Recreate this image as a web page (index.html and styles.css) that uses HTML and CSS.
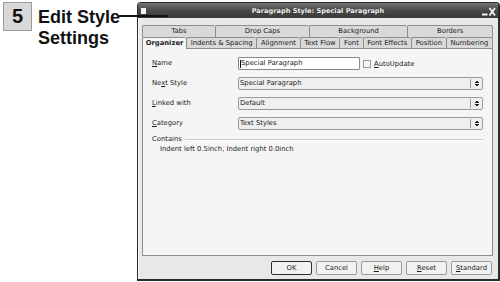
FILE: index.html
```html
<!DOCTYPE html>
<html lang="en">
<head>
  <meta charset="UTF-8" />
  <title>Paragraph Style</title>
  <link rel="stylesheet" href="styles.css">
</head>
<body>
  <div class="page">
    <div class="callout">
      <div class="step">5</div>
      <div class="step-title">Edit Style<br>Settings</div>
      <div class="pointer"></div>
    </div>

    <div class="window">
      <div class="titlebar">
        <div class="tb-left"><span class="win-icon"></span></div>
        <div class="win-title">Paragraph Style: Special Paragraph</div>
        <div class="tb-right">
          <svg width="14" height="9" viewBox="0 0 14 9">
            <rect x="0" y="6.5" width="5.5" height="2" fill="#f2f2f2"/>
            <path d="M7.5 1 L13 8.5 M13 1 L7.5 8.5" stroke="#f2f2f2" stroke-width="1.8"/>
          </svg>
        </div>
      </div>

      <div class="win-body">
        <div class="tab-row">
          <div class="tab">Tabs</div>
          <div class="tab">Drop Caps</div>
          <div class="tab">Background</div>
          <div class="tab">Borders</div>
        </div>
        <div class="tab-row front">
          <div class="tab active">Organizer</div>
          <div class="tab">Indents &amp; Spacing</div>
          <div class="tab">Alignment</div>
          <div class="tab">Text Flow</div>
          <div class="tab">Font</div>
          <div class="tab">Font Effects</div>
          <div class="tab">Position</div>
          <div class="tab">Numbering</div>
        </div>

        <div class="panel">
          <div class="form">
            <div class="label"><u>N</u>ame</div>
            <div class="field-line">
              <div class="entry"><span class="caret"></span>Special Paragraph</div>
              <span class="check"></span>
              <span class="check-label"><u>A</u>utoUpdate</span>
            </div>

            <div class="label">Ne<u>x</u>t Style</div>
            <div class="combo">
              <span class="combo-text">Special Paragraph</span>
              <span class="combo-arrows"></span>
            </div>

            <div class="label"><u>L</u>inked with</div>
            <div class="combo">
              <span class="combo-text">Default</span>
              <span class="combo-arrows"></span>
            </div>

            <div class="label"><u>C</u>ategory</div>
            <div class="combo">
              <span class="combo-text">Text Styles</span>
              <span class="combo-arrows"></span>
            </div>
          </div>

          <div class="contains">
            <span>Contains</span>
            <span class="rule"></span>
          </div>
          <div class="contains-text">Indent left 0.5inch, Indent right 0.0inch</div>
        </div>

        <div class="buttons">
          <div class="btn default">OK</div>
          <div class="btn">Cancel</div>
          <div class="btn"><u>H</u>elp</div>
          <div class="btn"><u>R</u>eset</div>
          <div class="btn"><u>S</u>tandard</div>
        </div>
      </div>
    </div>
  </div>
</body>
</html>
```

FILE: styles.css
```css
body {
  margin: 0;
  background-color: #fff;
  font-family: "DejaVu Sans", sans-serif;
  color: #1a1a1a;
  overflow: hidden;
}
.page {
  position: relative;
  display: flex;
  align-items: flex-start;
  height: 282px;
}

/* step callout */
.callout {
  width: 137px;
  flex-shrink: 0;
  display: flex;
  align-items: flex-start;
}
.step {
  margin: 2px 0 0 3px;
  width: 27px;
  height: 27px;
  border: 1px solid #9c9c9c;
  background-color: #d9d9d9;
  font: bold 20px/27px "Liberation Sans", sans-serif;
  text-align: center;
  color: #111;
}
.step-title {
  margin: 7px 0 0 6px;
  font: bold 18px/21px "Liberation Sans", sans-serif;
  color: #111;
}
.pointer {
  position: absolute;
  left: 119px;
  top: 15px;
  width: 49px;
  height: 2px;
  background-color: #111;
  z-index: 2;
}

/* dialog window */
.window {
  width: 360px;
  height: 276px;
  margin-top: 2px;
  border: solid #2a2a2a;
  border-width: 1px 2px 2px 1px;
  border-radius: 4px 4px 0 0;
  background-color: #e8e8e8;
  display: flex;
  flex-direction: column;
}
.titlebar {
  height: 15px;
  display: grid;
  grid-template-columns: 1fr auto 1fr;
  align-items: center;
  background: linear-gradient(#727272, #4a4a4a 50%, #3a3a3a);
  border-radius: 3px 3px 0 0;
  color: #f2f2f2;
}
.win-icon {
  display: block;
  margin: 0 0 0 3px;
  width: 5px;
  height: 6px;
  background-color: #f4f4f4;
}
.win-title {
  font-weight: bold;
  font-size: 6.6px;
  text-shadow: 0 0 1px #222;
}
.tb-right {
  display: flex;
  justify-content: flex-end;
  padding: 2px 2px 0 0;
}

.win-body {
  flex: 1;
  display: flex;
  flex-direction: column;
  padding: 7px 5px 4px 4px;
  box-shadow: inset 1px 0 #fafafa;
}
.tab-row {
  display: flex;
  height: 12px;
}
.tab-row.front {
  height: 11px;
  position: relative;
  z-index: 1;
}
.tab {
  flex: 1 1 auto;
  padding: 0 2px;
  border: 1px solid #8e8e8e;
  border-bottom: none;
  border-right: none;
  border-radius: 2px 2px 0 0;
  background-color: #d9d9d9;
  font-size: 6.8px;
  line-height: 11px;
  text-align: center;
  white-space: nowrap;
}
.tab:last-child {
  border-right: 1px solid #8e8e8e;
}
.tab-row.front .tab {
  line-height: 10px;
}
.tab-row.front .tab.active {
  font-weight: bold;
  background-color: #f5f5f5;
  margin-bottom: -1px;
  padding: 0 1px;
}

.panel {
  flex: 1;
  background-color: #f5f5f5;
  border: 1px solid #8e8e8e;
  padding: 8px 9px 0 9px;
}
.form {
  display: grid;
  grid-template-columns: 86px 1fr;
  grid-auto-rows: 13px;
  row-gap: 7px;
  font-size: 6.8px;
}
.label {
  line-height: 13px;
}
.field-line {
  display: flex;
  align-items: center;
}
.entry {
  width: 119px;
  height: 11px;
  border: 1px solid #8a8a8a;
  border-radius: 1px;
  background-color: #fff;
  padding-left: 1px;
  line-height: 11px;
  display: flex;
  align-items: center;
}
.caret {
  width: 1px;
  height: 8px;
  background-color: #111;
}
.check {
  margin-left: 3px;
  width: 6px;
  height: 6px;
  border: 1px solid #9a9a9a;
  background-color: #f4f4f4;
}
.check-label {
  margin-left: 3px;
}
.combo {
  display: flex;
  align-items: center;
  border: 1px solid #9a9a9a;
  border-radius: 2px;
  background-color: #efefef;
  padding-left: 1px;
  line-height: 11px;
}
.combo-text {
  flex: 1;
}
.combo-arrows {
  width: 11px;
  height: 9px;
  border-left: 1px solid #9a9a9a;
  background:
    linear-gradient(to bottom right, transparent 50%, #222 50%) 4px 1px / 2px 3px no-repeat,
    linear-gradient(to bottom left, transparent 50%, #222 50%) 6px 1px / 2px 3px no-repeat,
    linear-gradient(to top right, transparent 50%, #222 50%) 4px 5px / 2px 3px no-repeat,
    linear-gradient(to top left, transparent 50%, #222 50%) 6px 5px / 2px 3px no-repeat;
}

.contains {
  display: flex;
  align-items: center;
  gap: 3px;
  margin-top: 5px;
  font-size: 6.8px;
  line-height: 9px;
}
.rule {
  flex: 1;
  height: 1px;
  background-color: #c8c8c8;
  border-bottom: 1px solid #fff;
}
.contains-text {
  padding-left: 8px;
  margin-top: 1px;
  font-size: 6.8px;
  line-height: 9px;
}

.buttons {
  display: flex;
  justify-content: flex-end;
  gap: 4px;
  margin-top: 5px;
  padding-right: 1px;
}
.btn {
  width: 39px;
  height: 12px;
  border: 1px solid #9a9a9a;
  border-radius: 2px;
  background-color: #f2f2f2;
  font-size: 6.8px;
  line-height: 12px;
  text-align: center;
}
.btn.default {
  border-color: #2e2e2e;
}
```
